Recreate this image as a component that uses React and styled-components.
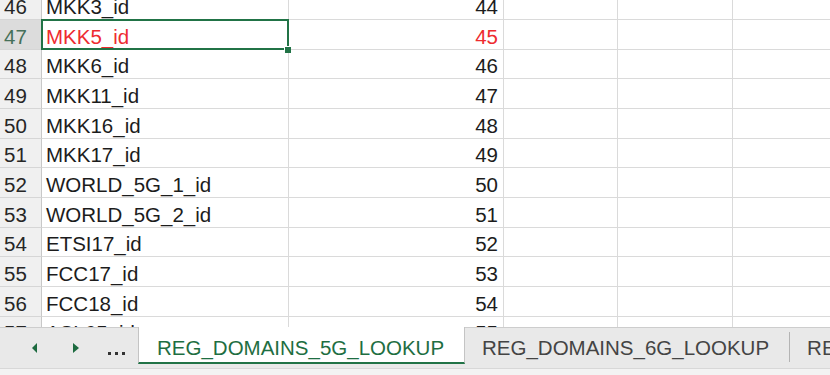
import React from "react";
import styled, { createGlobalStyle } from "styled-components";

const GlobalStyle = createGlobalStyle`
  html, body {
    margin: 0;
    padding: 0;
    background: #fff;
  }
  body {
    width: 830px;
    height: 375px;
    overflow: hidden;
    font-family: "Liberation Sans", Arial, sans-serif;
  }
  * { box-sizing: border-box; }
`;

const Window = styled.div`
  width: 830px;
  height: 375px;
  display: flex;
  flex-direction: column;
  overflow: hidden;
  background: #fff;
`;

const Sheet = styled.div`
  height: 327px;
  flex-shrink: 0;
  overflow: hidden;
`;

const Grid = styled.div`
  display: grid;
  grid-template-columns: 42px 247px 215px 114px 115px 140px;
  grid-auto-rows: 29.67px;
  margin-top: -9.67px;
  font-size: 20.5px;
  line-height: 23px;
`;

const RowHead = styled.div`
  display: flex;
  align-items: flex-end;
  padding: 0 0 1px 4px;
  background: ${(p) => (p.$active ? "#dcdcdc" : "#f0f0f0")};
  color: ${(p) => (p.$active ? "#467059" : "#262626")};
  border-right: 1px solid #c8c8c8;
  border-bottom: 1px solid #d6d6d6;
`;

const Cell = styled.div`
  position: relative;
  display: flex;
  align-items: flex-end;
  justify-content: ${(p) => (p.$num ? "flex-end" : "flex-start")};
  padding: 0 5px 1px 4px;
  white-space: nowrap;
  color: ${(p) => (p.$red ? "#ee2b2f" : "#1c1c1c")};
  border-right: 1px solid #dadada;
  border-bottom: 1px solid #dadada;
`;

const Selection = styled.span`
  position: absolute;
  top: -1px;
  left: -1px;
  right: -1px;
  bottom: -1px;
  border: 2px solid #217346;
  z-index: 2;
  pointer-events: none;
`;

const FillHandle = styled.span`
  position: absolute;
  right: -4px;
  bottom: -5px;
  width: 7px;
  height: 7px;
  background: #217346;
  border-top: 1px solid #fff;
  border-left: 1px solid #fff;
`;

const TabBar = styled.div`
  height: 41px;
  flex-shrink: 0;
  display: flex;
  align-items: flex-start;
  background: #e9e9e9;
  box-shadow: inset 0 1px 0 #cdcdcd;
  overflow: hidden;
  white-space: nowrap;
`;

const Nav = styled.div`
  width: 138px;
  height: 100%;
  flex-shrink: 0;
  display: flex;
  align-items: center;
  padding-left: 32px;
`;

const Arrow = styled.span`
  width: 0;
  height: 0;
  border-top: 5px solid transparent;
  border-bottom: 5px solid transparent;
  ${(p) =>
    p.$dir === "left"
      ? "border-right: 5px solid #1d6b40;"
      : "border-left: 6px solid #1d6b40; margin-left: 36px;"}
`;

const Dots = styled.span`
  display: flex;
  gap: 4px;
  align-self: flex-end;
  margin: 0 0 13px 29px;

  i {
    width: 3px;
    height: 3px;
    background: #333;
  }
`;

const Tab = styled.div`
  flex-shrink: 0;
  height: ${(p) => (p.$active ? "37px" : "41px")};
  padding: 9px ${(p) => (p.$active ? "0" : "20px")} 0 ${(p) => (p.$active ? "18px" : "17px")};
  font-size: 20.5px;
  line-height: 23px;
  color: ${(p) => (p.$active ? "#1e6e42" : "#444")};
  background: ${(p) => (p.$active ? "#fff" : "transparent")};
  ${(p) =>
    p.$active &&
    `
    width: 327px;
    overflow: hidden;
    border-left: 1px solid #c4c4c4;
    border-right: 1px solid #c4c4c4;
    border-bottom: 2px solid #217346;
  `}
`;

const Divider = styled.span`
  flex-shrink: 0;
  width: 1px;
  height: 30px;
  margin-top: 5px;
  background: #b4b4b4;
`;

const StatusStrip = styled.div`
  flex: 1;
  background: #f3f3f3;
  border-top: 1px solid #d8d8d8;
`;

const rows = [
  [46, "MKK3_id", 44],
  [47, "MKK5_id", 45],
  [48, "MKK6_id", 46],
  [49, "MKK11_id", 47],
  [50, "MKK16_id", 48],
  [51, "MKK17_id", 49],
  [52, "WORLD_5G_1_id", 50],
  [53, "WORLD_5G_2_id", 51],
  [54, "ETSI17_id", 52],
  [55, "FCC17_id", 53],
  [56, "FCC18_id", 54],
  [57, "ASL65_id", 55],
];

export default function App() {
  return (
    <Window>
      <GlobalStyle />
      <Sheet>
        <Grid>
          {rows.map(([n, name, val]) => {
            const active = n === 47;
            return (
              <React.Fragment key={n}>
                <RowHead $active={active}>{n}</RowHead>
                <Cell $red={active}>
                  {name}
                  {active && (
                    <Selection>
                      <FillHandle />
                    </Selection>
                  )}
                </Cell>
                <Cell $num $red={active}>{val}</Cell>
                <Cell />
                <Cell />
                <Cell />
              </React.Fragment>
            );
          })}
        </Grid>
      </Sheet>
      <TabBar>
        <Nav>
          <Arrow $dir="left" />
          <Arrow $dir="right" />
          <Dots>
            <i />
            <i />
            <i />
          </Dots>
        </Nav>
        <Tab $active>REG_DOMAINS_5G_LOOKUP</Tab>
        <Tab>REG_DOMAINS_6G_LOOKUP</Tab>
        <Divider />
        <Tab>REG_DOMAINS_COUNTRY_LOOKUP</Tab>
      </TabBar>
      <StatusStrip />
    </Window>
  );
}
